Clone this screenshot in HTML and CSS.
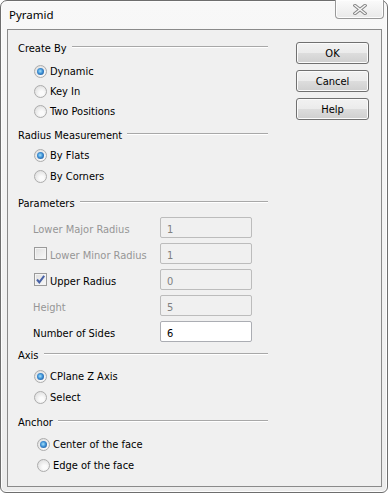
FILE: index.html
```html
<!DOCTYPE html>
<html lang="en">

<head>
  <meta charset="UTF-8">
  <title>Pyramid</title>
  <link rel="stylesheet" href="styles.css">
</head>

<body>
  <div class="window">
    <div class="titlebar">
      <span class="title">Pyramid</span>
      <button class="close" title="Close">
        <svg width="14" height="11" viewBox="0 0 14 11">
          <path d="M2 1.5 L12 9.5 M12 1.5 L2 9.5" stroke="#858585" stroke-width="3.4" stroke-linecap="square" fill="none"/>
          <path d="M2 1.5 L12 9.5 M12 1.5 L2 9.5" stroke="#f7f7f7" stroke-width="1.5" stroke-linecap="square" fill="none"/>
        </svg>
      </button>
    </div>

    <div class="client">
      <div class="form">
        <div class="group-head head-create"><span>Create By</span></div>
        <div class="options options-create">
          <div class="option short"><span class="radio on"></span>Dynamic</div>
          <div class="option short"><span class="radio"></span>Key In</div>
          <div class="option short"><span class="radio"></span>Two Positions</div>
        </div>

        <div class="group-head head-radius"><span>Radius Measurement</span></div>
        <div class="options options-radius">
          <div class="option"><span class="radio on"></span>By Flats</div>
          <div class="option"><span class="radio"></span>By Corners</div>
        </div>

        <div class="group-head head-params"><span>Parameters</span></div>
        <div class="params">
          <div class="param">
            <span class="param-label disabled">Lower Major Radius</span>
            <input class="field" type="text" value="1" disabled>
          </div>
          <div class="param">
            <span class="param-label disabled with-check"><span class="check"></span>Lower Minor Radius</span>
            <input class="field" type="text" value="1" disabled>
          </div>
          <div class="param">
            <span class="param-label with-check">
              <span class="check">
                <svg width="11" height="11" viewBox="0 0 11 11">
                  <path d="M2 5.5 L4.3 8.3 L9.2 1.8" stroke="#4862a6" stroke-width="2" fill="none"/>
                </svg>
              </span>Upper Radius</span>
            <input class="field" type="text" value="0" disabled>
          </div>
          <div class="param">
            <span class="param-label disabled">Height</span>
            <input class="field" type="text" value="5" disabled>
          </div>
          <div class="param">
            <span class="param-label">Number of Sides</span>
            <input class="field active" type="text" value="6">
          </div>
        </div>

        <div class="group-head head-axis"><span>Axis</span></div>
        <div class="options options-axis">
          <div class="option"><span class="radio on"></span>CPlane Z Axis</div>
          <div class="option"><span class="radio"></span>Select</div>
        </div>

        <div class="group-head head-anchor"><span>Anchor</span></div>
        <div class="options options-anchor">
          <div class="option"><span class="radio on"></span>Center of the face</div>
          <div class="option"><span class="radio"></span>Edge of the face</div>
        </div>
      </div>

      <div class="actions">
        <button class="btn">OK</button>
        <button class="btn">Cancel</button>
        <button class="btn">Help</button>
      </div>
    </div>
  </div>
</body>

</html>
```

FILE: styles.css
```css
body {
  margin: 0;
  font-family: "DejaVu Sans Condensed", "DejaVu Sans", sans-serif;
  font-size: 11px;
  color: #000;
  background: #fff;
}

.window {
  width: 388px;
  height: 493px;
  box-sizing: border-box;
  border: 1px solid #6e6e6e;
  border-radius: 7px 7px 6px 6px;
  background: linear-gradient(#f8f8f8, #ececec);
  box-shadow: inset 0 0 0 1px #fdfdfd;
  padding: 0 5px 5px 6px;
  display: flex;
  flex-direction: column;
}

.titlebar {
  height: 28px;
  display: flex;
  justify-content: space-between;
  align-items: flex-start;
}

.title {
  font-family: "Noto Sans", sans-serif;
  font-size: 11.5px;
  line-height: 16px;
  padding: 6px 0 0 2px;
}

.close {
  width: 49px;
  height: 19px;
  margin: -1px -2px 0 0;
  padding: 0;
  border: 1px solid #999;
  border-top: none;
  border-radius: 0 0 4px 4px;
  background: linear-gradient(#fbfbfb, #e9e9e9);
  box-shadow: inset 0 0 0 1px #fdfdfd;
  display: flex;
  align-items: center;
  justify-content: center;
}

.client {
  flex: 1;
  border: 1px solid #8a8a8a;
  background: #f0f0f0;
  display: flex;
}

.form {
  width: 250px;
  padding: 10px 0 0 10px;
  display: flex;
  flex-direction: column;
}

.group-head {
  height: 16px;
  display: flex;
  align-items: flex-start;
  gap: 5px;
}

.group-head span {
  line-height: 14px;
  padding-top: 2px;
}

.group-head::after {
  content: "";
  flex: 1;
  margin-top: 6px;
  border-top: 1px solid #a8a8a8;
  border-bottom: 1px solid #fff;
}

.head-radius { margin-top: 6px; }
.head-params { margin-top: 8px; }
.head-axis { margin-top: 5px; }
.head-anchor { margin-top: 6px; }

.options-create { margin-top: 5px; }
.options-radius { margin-top: 2px; }
.options-axis { margin-top: 3px; }
.options-anchor { margin-top: 4px; }

.option {
  height: 21px;
  display: flex;
  align-items: center;
  gap: 3px;
  padding-left: 16px;
}

.option.short {
  height: 20px;
}

.options-anchor .option {
  padding-left: 19px;
}

.radio {
  flex: none;
  position: relative;
  width: 13px;
  height: 13px;
  box-sizing: border-box;
  border-radius: 50%;
  border: 1px solid #acacac;
  background: radial-gradient(circle at 60% 65%, #fbfbfb 20%, #e4e4e4 70%, #d4d4d4 100%);
}

.radio.on::after {
  content: "";
  position: absolute;
  left: 2px;
  top: 2px;
  width: 7px;
  height: 7px;
  border-radius: 50%;
  background: radial-gradient(circle at 45% 45%, #a6e3fa 0, #3d8fd5 45%, #16427f 100%);
}

.params {
  margin-top: 6px;
  display: flex;
  flex-direction: column;
  gap: 5px;
}

.param {
  height: 21px;
  display: grid;
  grid-template-columns: 127px 92px;
  align-items: center;
  padding-left: 15px;
}

.param-label {
  display: flex;
  align-items: center;
  gap: 3px;
  padding-top: 3px;
}

.param-label.with-check {
  margin-left: 1px;
}

.param-label .check {
  margin-top: -3px;
}

.disabled {
  color: #969696;
}

.check {
  flex: none;
  width: 13px;
  height: 13px;
  box-sizing: border-box;
  border: 1px solid #9a9a9a;
  background: linear-gradient(135deg, #dedede, #f9f9f9);
  box-shadow: inset 0 0 0 1px #f4f4f4;
  display: flex;
  align-items: center;
  justify-content: center;
}

.field {
  width: 92px;
  height: 21px;
  box-sizing: border-box;
  margin: 0;
  padding: 3px 0 0 6px;
  border: 1px solid #bcbcbc;
  border-radius: 2px;
  background: #f0f0f0;
  font: inherit;
  color: #808080;
  -webkit-text-fill-color: #808080;
  outline: none;
}

.field.active {
  background: #fff;
  border-color: #abadb3;
  color: #000;
  -webkit-text-fill-color: #000;
}

.actions {
  margin-left: 28px;
  padding-top: 12px;
  display: flex;
  flex-direction: column;
  gap: 6px;
}

.btn {
  width: 73px;
  height: 22px;
  padding: 0;
  border: 1px solid #707070;
  border-radius: 3px;
  background: linear-gradient(#f2f2f2 0%, #ebebeb 50%, #dddddd 50%, #cfcfcf 100%);
  box-shadow: inset 0 0 0 1px #fbfbfb;
  font: inherit;
  color: #000;
}
```
